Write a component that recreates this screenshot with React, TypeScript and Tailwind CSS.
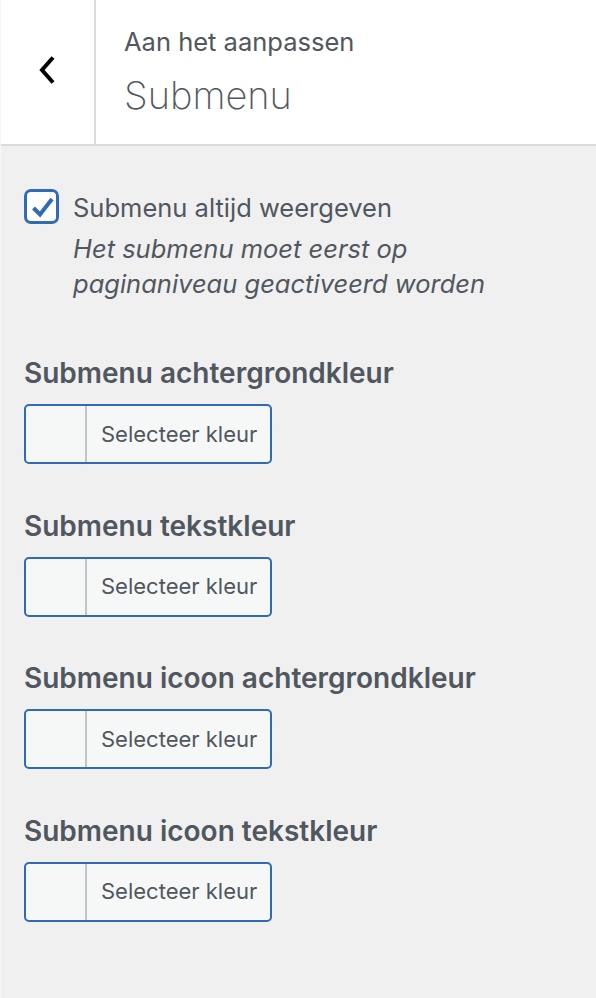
import React from "react";

const colorFields = [
	"Submenu achtergrondkleur",
	"Submenu tekstkleur",
	"Submenu icoon achtergrondkleur",
	"Submenu icoon tekstkleur",
];

const ColorButton = () => {
	return (
		<button
			type="button"
			className="flex h-[60px] w-[248px] items-stretch overflow-hidden rounded-[5px] border-2 border-[#2f6cb1] bg-[#f6f7f7] text-left"
		>
			<span className="w-[61px] border-r-2 border-[#c3c4c7]"></span>
			<span className="flex items-center pl-[14px] text-[22px] text-[#50575e]">Selecteer kleur</span>
		</button>
	);
};

const App = () => {
	return (
		<div
			className="min-h-[998px] w-[596px] bg-[#f0f0f1] border-l border-[#f6f6f7]"
			style={{ fontFamily: "Inter, 'Noto Sans', sans-serif" }}
		>
			<header className="flex h-[146px] border-b-2 border-[#dcdcde] bg-white">
				<div className="flex w-[95px] items-center justify-center border-r-2 border-[#dcdcde] pb-[4px]">
					<svg width="20" height="30" viewBox="0 0 20 30" fill="none">
						<path d="M15 2.5 L4 15 L15 27.5" stroke="#000" strokeWidth="4" />
					</svg>
				</div>
				<div className="flex flex-col pl-[28px] pt-[24px]">
					<span className="text-[25.5px] leading-[36px] text-[#50575e]">Aan het aanpassen</span>
					<span className="mt-[10px] text-[38px] font-extralight leading-[50px] text-[#50575e]">Submenu</span>
				</div>
			</header>

			<main className="px-[23px] pt-[43px]">
				<div className="flex gap-[14px]">
					<div className="flex h-[35px] w-[35px] shrink-0 items-center justify-center rounded-[7px] border-[3px] border-[#2f6cb1] bg-white">
						<svg width="29" height="29" viewBox="0 0 29 29" fill="none">
							<path d="M6.5 16 L13 22.5 L25 7" stroke="#2f6cb1" strokeWidth="4" />
						</svg>
					</div>
					<div className="mt-[1px] flex flex-col text-[25.5px] text-[#50575e]">
						<span className="leading-[36px]">Submenu altijd weergeven</span>
						<span className="mt-[5px] italic leading-[35px]">
							Het submenu moet eerst op
							<br />
							paginaniveau geactiveerd worden
						</span>
					</div>
				</div>

				<div className="mt-[54px] flex flex-col gap-[43.5px]">
					{colorFields.map((label) => (
						<div key={label} className="flex flex-col gap-[13px]">
							<h3 className="text-[28px] font-semibold leading-[36px] text-[#50575e]">{label}</h3>
							<ColorButton />
						</div>
					))}
				</div>
			</main>
		</div>
	);
};

export default App;
